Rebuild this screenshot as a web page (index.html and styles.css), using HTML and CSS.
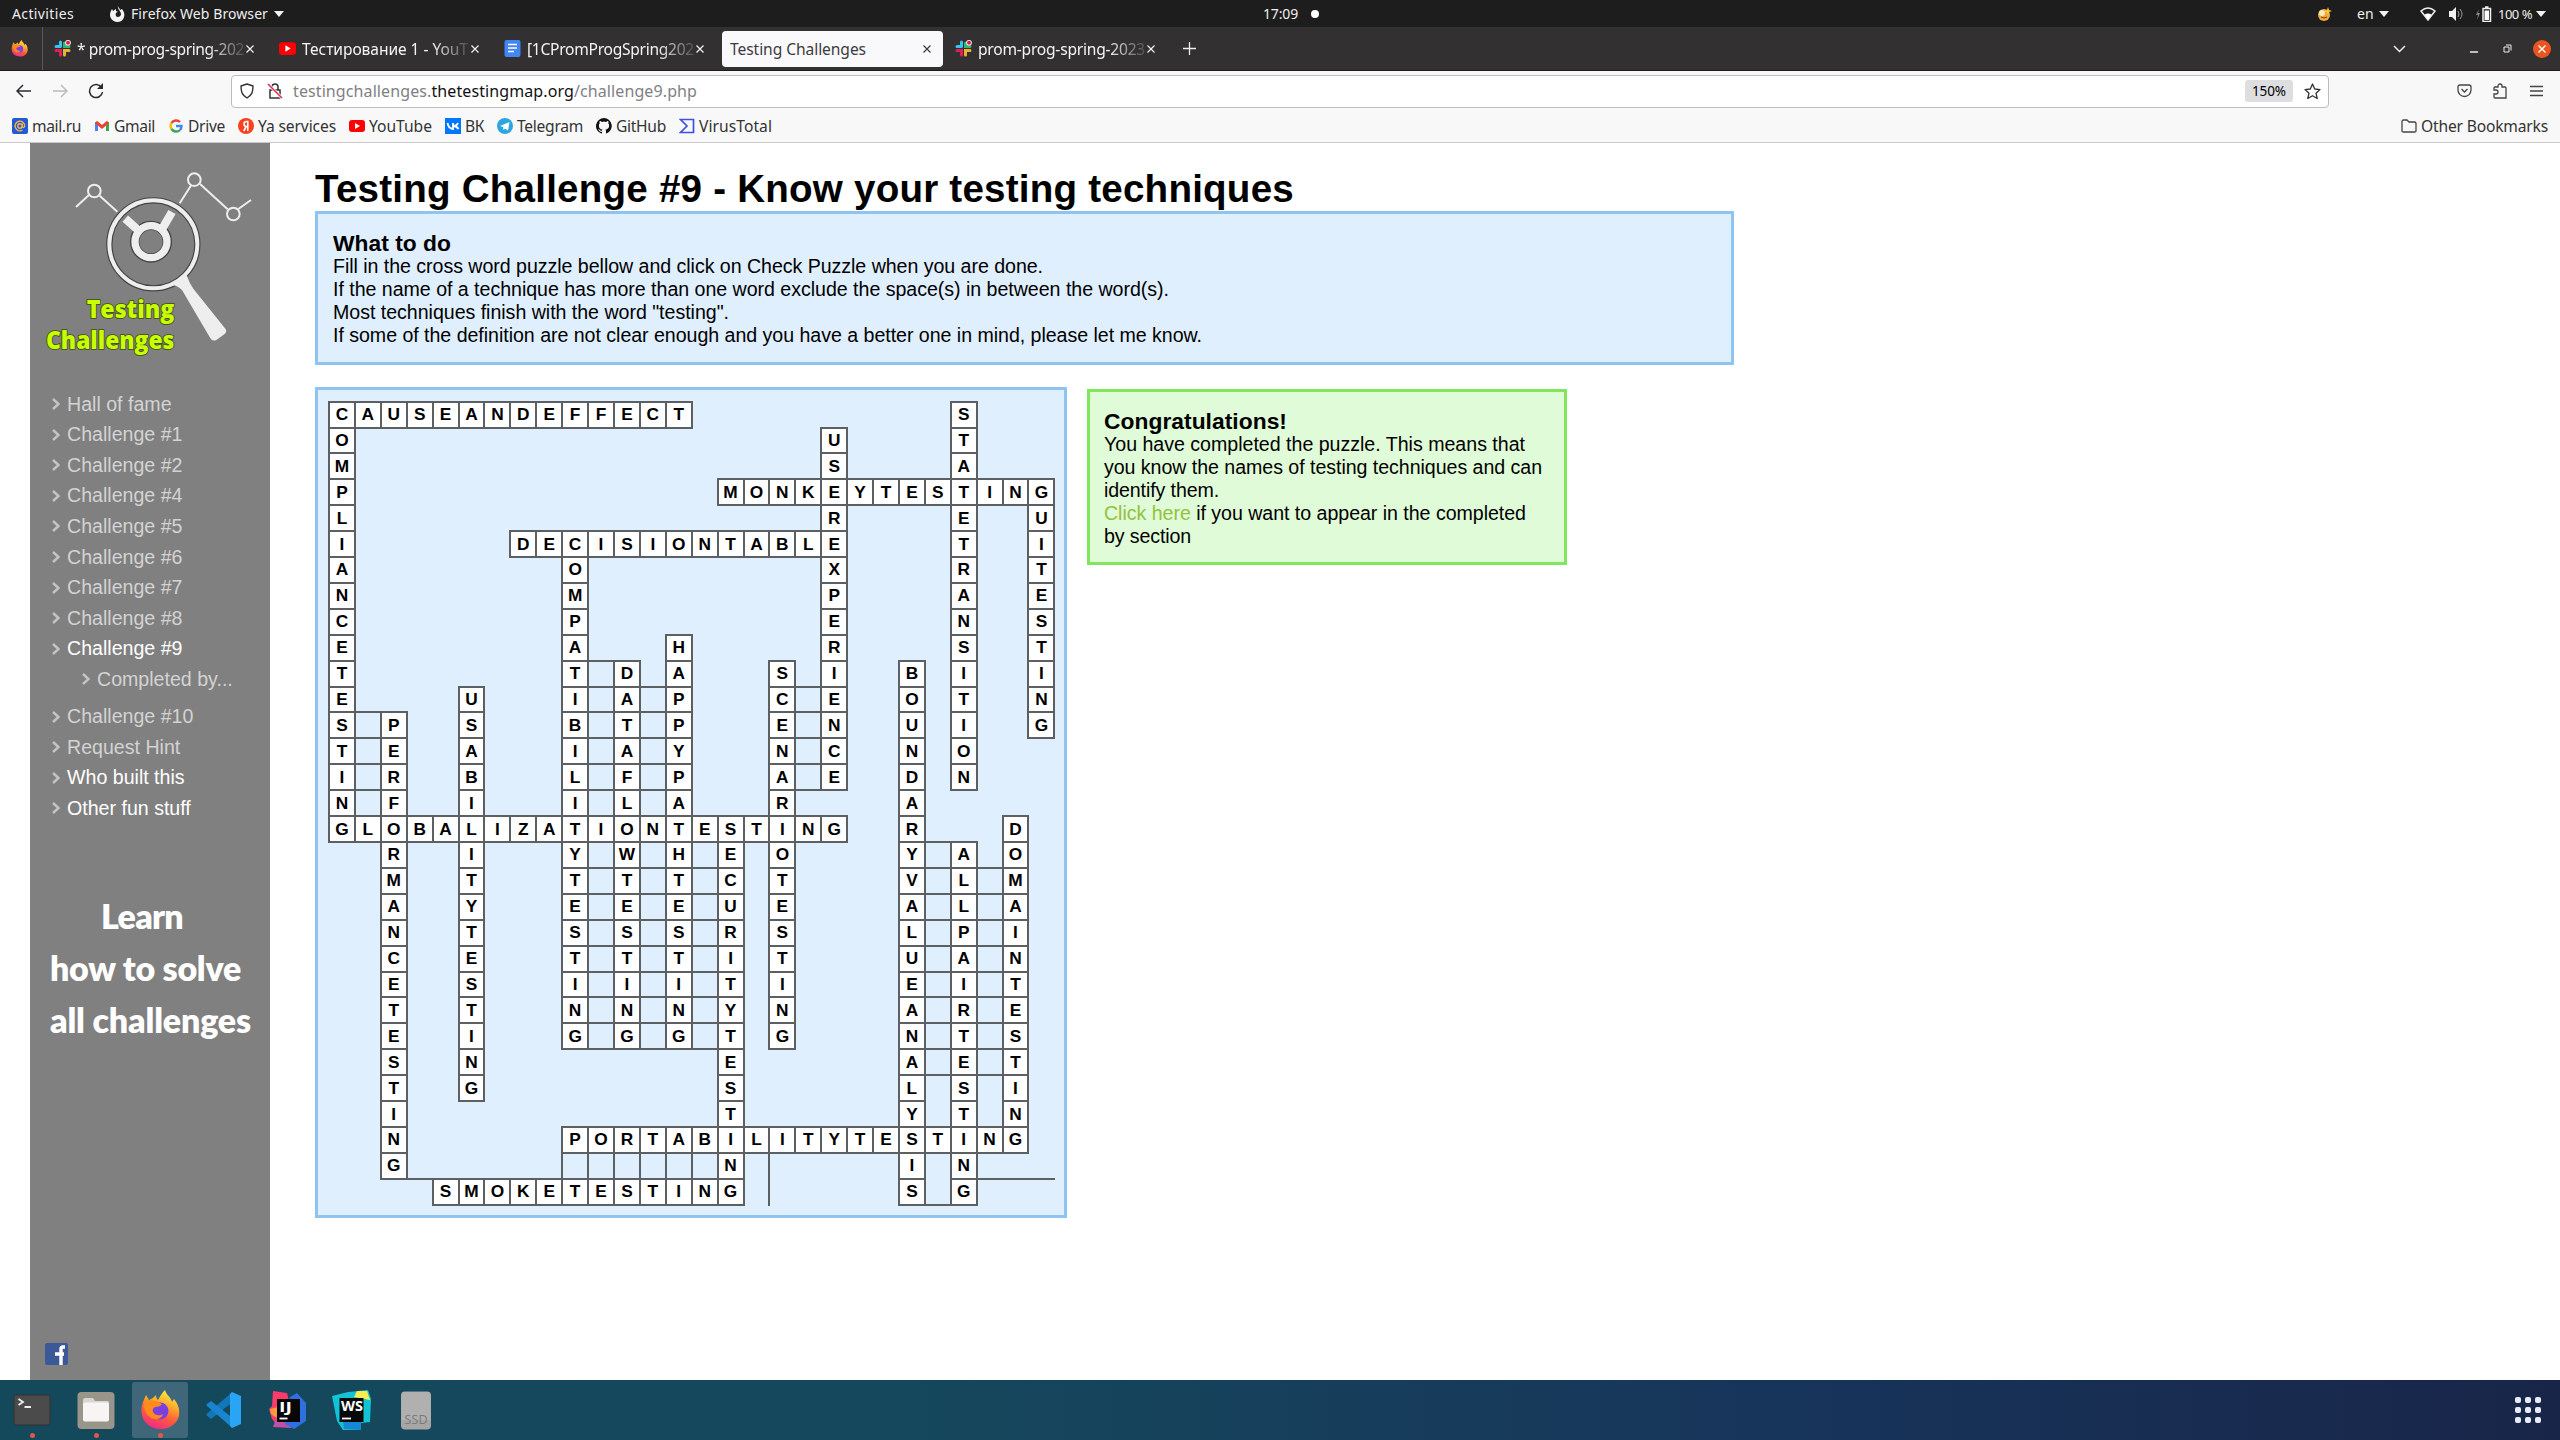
FILE: index.html
```html
<!DOCTYPE html>
<html lang="en">
<head>
<meta charset="utf-8">
<title>Testing Challenges</title>
<link rel="stylesheet" href="styles.css">
</head>
<body>
<svg width="0" height="0" class="defs">
  <defs>
    <linearGradient id="flame" x1=".7" y1="0" x2=".3" y2="1"><stop offset="0" stop-color="#fff14a"/><stop offset=".35" stop-color="#ffa72b"/><stop offset=".65" stop-color="#ff5a3c"/><stop offset="1" stop-color="#f0288c"/></linearGradient>
    <symbol id="firefox" viewBox="0 0 40 40">
      <path fill="url(#flame)" d="M25 0c1 5 6 7 7 12l2-3c4 5 6 10 5 16-1 8-9 14-18 14C10 39 2 32 1.500 22 1 15 4 10 6 5l3 5c3-1 5-3 7-5 0 3 1 4 2 5 2-4 4-7 7-10z"/>
      <circle cx="20" cy="21" r="8.500" fill="#7a3fe0"/>
      <path fill="#ff8a1e" d="M5 11c4-1 9-1 13 1l4 2c-1 2-4 3-7 3-2 1-3 3-2 5 2 4 7 4 10 2-1 5-8 7-13 3-5-3-7-9-5-16z"/>
    </symbol>
    <symbol id="slack" viewBox="0 0 17 17">
      <g stroke-width="3" stroke-linecap="round" fill="none"><path d="M6.500 2v4.500M2 6.500h4.500" stroke="#36c5f0"/><path d="M10.500 3v3.500h4.500" stroke="#2eb67d"/><path d="M10.500 15v-4.500H15" stroke="#ecb22e"/><path d="M2 10.500h4.500V15" stroke="#e01e5a"/></g>
      <circle cx="14" cy="2.800" r="2.800" fill="#fff"/><circle cx="14" cy="2.800" r="2" fill="#e01e3a"/>
    </symbol>
    <symbol id="youtube" viewBox="0 0 16 16"><rect y="2" width="16" height="12" rx="3" fill="#f00"/><path d="M6 5l5 3-5 3z" fill="#fff"/></symbol>
    <symbol id="x" viewBox="0 0 10 10"><path d="M1.500 1.500l7 7m0-7l-7 7" stroke="currentColor" stroke-width="1.200"/></symbol>
    <symbol id="chev" viewBox="0 0 8 12"><path d="M1 1l5.500 5L1 11" fill="none" stroke="#c4c4c4" stroke-width="2.400"/></symbol>
  </defs>
</svg>

<div class="topbar">
  <span class="t" data-w="62">Activities</span>
  <svg class="ff-mono" width="16" height="18" viewBox="0 0 16 18"><path d="M9 1c0 2 2 2 2 4l2-1c2 3 3 5 2 8-1 4-4 5-7 5s-7-3-7-7c0-3 1-4 2-6l1 2 3-2v2l2 1c-2 0-3 2-2 4 1 2 5 1 5-2S8 4 9 1z" fill="#f2f2f2"/></svg>
  <span class="t" data-w="137">Firefox Web Browser</span><i class="caret caret-app"></i>
  <span class="t clock" data-w="35">17:09</span><i class="dot"></i>
  <span class="spacer"></span>
  <svg width="15" height="16" viewBox="0 0 15 16"><circle cx="7" cy="9" r="6" fill="#f0a93a"/><circle cx="5" cy="7" r="3" fill="#ffe9ba"/><path d="M11 1l1 3 3 1-3 1-1 3-1-3-3-1 3-1z" fill="#ffc83d"/><path d="M4 11q3 2 6 0" stroke="#7b3c10" fill="none"/></svg>
  <span class="t lang" data-w="17">en</span><i class="caret caret-lang"></i>
  <svg class="wifi" width="16" height="14" viewBox="0 0 16 14"><path d="M1 4q7-6 14 0L8 13z" fill="none" stroke="#eee" stroke-width="1.500"/><path d="M4.500 7.500q3.500-2 7 0L8 13z" fill="#fff"/></svg>
  <svg class="sound" width="17" height="14" viewBox="0 0 17 14"><path d="M1 4h3l4-4v14l-4-4H1z" fill="#f2f2f2"/><path d="M10 4q2 3 0 6M12 2q4 5 0 10" fill="none" stroke="#999"/></svg>
  <svg class="battery" width="16" height="16" viewBox="0 0 16 16"><path d="M3 3L0 9h2l-1 5 3-7H2z" fill="#888"/><path d="M7 2.500h7.500v13H7zM9 1h3.500" fill="none" stroke="#eee" stroke-width="1.500"/><path d="M8.500 4.500h4.500v9.500H8.500z" fill="#fff"/></svg>
  <span class="t pct" data-w="34">100 %</span><i class="caret caret-end"></i>
</div>

<div class="tabs">
  <div class="pinned"><svg width="17" height="17"><use href="#firefox"/></svg></div>
  <div class="tab"><svg width="17" height="17"><use href="#slack"/></svg><span class="t fade" data-w="167">* prom-prog-spring-202</span><svg class="close" width="10" height="10"><use href="#x"/></svg></div>
  <div class="tab"><svg width="17" height="17"><use href="#youtube"/></svg><span class="t fade" data-w="166">Тестирование 1 - YouT</span><svg class="close" width="10" height="10"><use href="#x"/></svg></div>
  <div class="tab"><svg width="17" height="17" viewBox="0 0 17 17"><rect x=".5" width="16" height="17" rx="2" fill="#4285f4"/><path d="M4 4.500h9M4 8h9M4 11.500h6" stroke="#fff" stroke-width="1.600"/></svg><span class="t fade" data-w="167">[1CPromProgSpring202</span><svg class="close" width="10" height="10"><use href="#x"/></svg></div>
  <div class="tab active"><span class="t" data-w="136">Testing Challenges</span><svg class="close" width="10" height="10"><use href="#x"/></svg></div>
  <div class="tab"><svg width="17" height="17"><use href="#slack"/></svg><span class="t fade" data-w="167">prom-prog-spring-2023</span><svg class="close" width="10" height="10"><use href="#x"/></svg></div>
  <svg class="plus" width="13" height="13" viewBox="0 0 13 13"><path d="M6.500 0v13M0 6.500h13" stroke="#eee" stroke-width="1.300"/></svg>
  <span class="spacer"></span>
  <svg class="list" width="13" height="8" viewBox="0 0 13 8"><path d="M1 1l5.500 5.500L12 1" fill="none" stroke="#eee" stroke-width="1.500"/></svg>
  <svg class="min" width="8" height="8" viewBox="0 0 8 8"><path d="M0 7h8" stroke="#eee" stroke-width="1.500"/></svg>
  <svg class="restore" width="9" height="9" viewBox="0 0 9 9"><path d="M1 3h5v5H1zM3 1h5v5.500" fill="none" stroke="#eee"/></svg>
  <svg width="18" height="18" viewBox="0 0 18 18"><circle cx="9" cy="9" r="9" fill="#e95420"/><path d="M5.500 5.500l7 7m0-7l-7 7" stroke="#fff" stroke-width="1.300"/></svg>
</div>

<div class="nav">
  <svg width="16" height="14" viewBox="0 0 16 14"><path d="M7 1L1 7l6 6M1 7h14" fill="none" stroke="#2b2a33" stroke-width="1.500"/></svg>
  <svg class="fwd" width="16" height="14" viewBox="0 0 16 14"><path d="M9 1l6 6-6 6M15 7H1" fill="none" stroke="#bbb" stroke-width="1.500"/></svg>
  <svg class="reload" width="16" height="16" viewBox="0 0 16 16"><path d="M13.500 4.500A6.500 6.500 0 1 0 14.500 9" fill="none" stroke="#2b2a33" stroke-width="1.500"/><path d="M15 0v6H9z" fill="#2b2a33"/></svg>
  <div class="url">
    <svg width="16" height="16" viewBox="0 0 16 16"><path d="M8 1l6 2c0 6-1 9-6 12-5-3-6-6-6-12z" fill="none" stroke="#333" stroke-width="1.400" stroke-linejoin="round"/></svg>
    <svg class="lock" width="16" height="16" viewBox="0 0 16 16"><path d="M3 7h10v8H3zM5 7V4a3 3 0 0 1 6 0v3" fill="none" stroke="#333" stroke-width="1.500"/><path d="M1 1l14 14" stroke="#fff" stroke-width="3"/><path d="M1 1l14 14" stroke="#e22850" stroke-width="1.500"/></svg>
    <span class="t addr" data-w="404">testingchallenges.<b>thetestingmap.org</b>/challenge9.php</span>
    <span class="spacer"></span>
    <span class="zoom"><span class="t" data-w="34">150%</span></span>
    <svg width="17" height="17" viewBox="0 0 17 17"><path d="M8.500 1l2.200 5 5.300.600-4 3.600 1.200 5.300-4.700-2.800-4.700 2.800L5 10.200 1 6.600 6.300 6z" fill="none" stroke="#333" stroke-width="1.300" stroke-linejoin="round"/></svg>
  </div>
  <span class="spacer"></span>
  <svg class="pocket" width="15" height="14" viewBox="0 0 15 14"><path d="M1 3q0-2 2-2h9q2 0 2 2v3a6.500 6.500 0 0 1-13 0z" fill="none" stroke="#444" stroke-width="1.300"/><path d="M4.500 5l3 3 3-3" fill="none" stroke="#444" stroke-width="1.300"/></svg>
  <svg class="ext" width="15" height="16" viewBox="0 0 15 16"><path d="M1 6V5q0-1 1-1h3V3a2 2 0 0 1 4 0v1h3q1 0 1 1v10H2q-1 0-1-1v-3h2a1.800 1.800 0 0 0 0-4H1z" fill="none" stroke="#444" stroke-width="1.300"/></svg>
  <svg width="13" height="12" viewBox="0 0 13 12"><path d="M0 1.500h13M0 6h13M0 10.500h13" stroke="#444" stroke-width="1.300"/></svg>
</div>

<div class="marks">
  <a><svg width="16" height="16" viewBox="0 0 16 16"><rect width="16" height="16" rx="2" fill="#1f5bd6"/><circle cx="8" cy="8" r="2.200" fill="none" stroke="#ffb340" stroke-width="1.400"/><path d="M10.200 5.500v3.500q1.500 1.500 2.500-1a4.800 4.800 0 1 0-2.200 4" fill="none" stroke="#ffb340" stroke-width="1.300"/></svg><span class="t" data-w="49">mail.ru</span></a>
  <a><svg width="16" height="16" viewBox="0 0 16 16"><path d="M2.500 13V4" stroke="#4285f4" stroke-width="3"/><path d="M13.500 13V4" stroke="#34a853" stroke-width="3"/><path d="M2 4l6 5 6-5" fill="none" stroke="#ea4335" stroke-width="3"/></svg><span class="t" data-w="41">Gmail</span></a>
  <a><svg width="16" height="16" viewBox="0 0 16 16"><g fill="none" stroke-width="2.400"><path d="M12 4A5.500 5.500 0 0 0 3.500 5" stroke="#ea4335"/><path d="M3.500 5a5.500 5.500 0 0 0 0 6" stroke="#fbbc05"/><path d="M3.500 11a5.500 5.500 0 0 0 8.500 1" stroke="#34a853"/><path d="M12 12q1.500-1.500 1.500-4H8" stroke="#4285f4"/></g></svg><span class="t" data-w="37">Drive</span></a>
  <a><svg width="16" height="16" viewBox="0 0 16 16"><circle cx="8" cy="8" r="8" fill="#fc3f1d"/><path d="M9.800 13V3.500H8.500q-2.500 0-2.500 2.500t2.500 2.500h1.300M8.200 8.500L5.800 13" fill="none" stroke="#fff" stroke-width="1.600"/></svg><span class="t" data-w="78">Ya services</span></a>
  <a><svg width="16" height="16"><use href="#youtube"/></svg><span class="t" data-w="63">YouTube</span></a>
  <a><svg width="16" height="16" viewBox="0 0 16 16"><rect width="16" height="16" fill="#07f"/><path d="M2.500 5q1 5.500 5.500 6V5M13 5q-1 3-5 3 4 0 5.500 3" fill="none" stroke="#fff" stroke-width="1.800"/></svg><span class="t" data-w="19">ВК</span></a>
  <a><svg width="16" height="16" viewBox="0 0 16 16"><circle cx="8" cy="8" r="8" fill="#2ca5e0"/><path d="M3 8l9.500-4-1.500 8.500-3-2-1.500 1.500-.5-3z" fill="#fff"/></svg><span class="t" data-w="66">Telegram</span></a>
  <a><svg width="16" height="16" viewBox="0 0 16 16"><path fill="#111" d="M8 0a8 8 0 0 0-2.500 15.600c.4 0 .5-.2.500-.4v-1.500c-2.200.500-2.700-1-2.700-1-.4-1-.9-1.200-.9-1.200-.7-.5.100-.5.100-.5.800.100 1.200.800 1.200.800.700 1.300 1.900.900 2.300.700.100-.5.300-.9.500-1.100-1.800-.2-3.600-.9-3.600-4 0-.9.300-1.600.8-2.100-.1-.2-.4-1 .1-2.200 0 0 .7-.2 2.200.8a7.500 7.500 0 0 1 4 0c1.500-1 2.200-.8 2.200-.8.400 1.200.2 2 .1 2.200.5.500.8 1.200.8 2.100 0 3.100-1.900 3.800-3.700 4 .3.300.6.800.6 1.500v2.200c0 .2.100.5.500.4A8 8 0 0 0 8 0z"/></svg><span class="t" data-w="50">GitHub</span></a>
  <a><svg width="16" height="16" viewBox="0 0 16 16"><path d="M1.500 1.500h13v13h-13L8 8z" fill="none" stroke="#3f51e5" stroke-width="1.700"/></svg><span class="t" data-w="73">VirusTotal</span></a>
  <span class="spacer"></span>
  <a class="other"><svg width="16" height="14" viewBox="0 0 16 14"><path d="M1 12V2.500Q1 1 2.500 1H6l2 2h5.500Q15 3 15 4.500V12q0 1-1.500 1h-11Q1 13 1 12z" fill="none" stroke="#444" stroke-width="1.300"/></svg><span class="t" data-w="127">Other Bookmarks</span></a>
</div>

<div class="page">
  <aside class="side">
    <svg class="logo" width="240" height="220" viewBox="90 9 720 660">
      <g fill="none" stroke="#444" stroke-width="13"><circle cx="460" cy="313" r="132" stroke-width="19"/><circle cx="453" cy="305" r="49" stroke-width="28"/></g>
      <g fill="none" stroke="#eee" stroke-width="6">
        <path d="M228 201L266 166M299 167L352 215M539 190L574 135M600 132L683 208M715 207L753 180"/>
        <circle cx="283" cy="153" r="19"/><circle cx="583" cy="119" r="19"/><circle cx="700" cy="222" r="19"/>
        <circle cx="460" cy="313" r="132" stroke-width="12"/>
        <circle cx="453" cy="305" r="48" stroke-width="22"/>
        <path d="M376 236L414 270M516 216L488 264" stroke-width="25"/>
      </g>
      <path d="M514 436L560 406 Q568 430 580 446L676 566Q682 573 674 582L648 601Q638 604 632 596L546 450Q530 434 514 436z" fill="#eee"/>
      <g class="logo-text"><text x="260" y="535" textLength="263" lengthAdjust="spacingAndGlyphs">Testing</text><text x="138" y="626" textLength="385" lengthAdjust="spacingAndGlyphs">Challenges</text></g>
    </svg>
    <ul class="menu">
      <li><svg width="8" height="12"><use href="#chev"/></svg>Hall of fame</li>
      <li><svg width="8" height="12"><use href="#chev"/></svg>Challenge #1</li>
      <li><svg width="8" height="12"><use href="#chev"/></svg>Challenge #2</li>
      <li><svg width="8" height="12"><use href="#chev"/></svg>Challenge #4</li>
      <li><svg width="8" height="12"><use href="#chev"/></svg>Challenge #5</li>
      <li><svg width="8" height="12"><use href="#chev"/></svg>Challenge #6</li>
      <li><svg width="8" height="12"><use href="#chev"/></svg>Challenge #7</li>
      <li><svg width="8" height="12"><use href="#chev"/></svg>Challenge #8</li>
      <li class="on"><svg width="8" height="12"><use href="#chev"/></svg>Challenge #9</li>
      <li class="sub"><svg width="8" height="12"><use href="#chev"/></svg>Completed by...</li>
      <li><svg width="8" height="12"><use href="#chev"/></svg>Challenge #10</li>
      <li><svg width="8" height="12"><use href="#chev"/></svg>Request Hint</li>
      <li class="on"><svg width="8" height="12"><use href="#chev"/></svg>Who built this</li>
      <li class="on"><svg width="8" height="12"><use href="#chev"/></svg>Other fun stuff</li>
    </ul>
    <div class="learn"><span class="l1" data-w="82">Learn</span><span data-w="191">how to solve</span><span data-w="201">all challenges</span></div>
    <svg class="fb" width="23" height="22" viewBox="0 0 23 22"><rect width="23" height="22" rx="2" fill="#3b5998"/><path d="M20 4h-2q-2 0-2 2v16M10 11h9" fill="none" stroke="#fff" stroke-width="3.400"/></svg>
  </aside>
  <main>
    <h1><span data-w="979">Testing Challenge #9 - Know your testing techniques</span></h1>
    <section class="box todo">
      <h2><span data-w="118">What to do</span></h2>
      <p><span data-w="710">Fill in the cross word puzzle bellow and click on Check Puzzle when you are done.</span></p>
      <p><span data-w="836">If the name of a technique has more than one word exclude the space(s) in between the word(s).</span></p>
      <p><span data-w="396">Most techniques finish with the word "testing".</span></p>
      <p><span data-w="869">If some of the definition are not clear enough and you have a better one in mind, please let me know.</span></p>
    </section>
    <div class="row">
      <section class="box puzzle"><div class="grid" id="grid"></div></section>
      <section class="box done">
        <h2><span data-w="183">Congratulations!</span></h2>
        <p><span data-w="421">You have completed the puzzle. This means that</span></p>
        <p><span data-w="438">you know the names of testing techniques and can</span></p>
        <p><span data-w="115">identify them.</span></p>
        <p><span data-w="422"><a>Click here</a> if you want to appear in the completed</span></p>
        <p><span data-w="87">by section</span></p>
      </section>
    </div>
  </main>
</div>

<div class="dock">
  <div class="app run"><svg width="40" height="40" viewBox="0 0 40 40"><rect x="2" y="5" width="36" height="30" rx="2" fill="#4b4b4b" stroke="#333"/><path d="M6.500 9l4.500 3-4.500 3M12.500 17h6.500" fill="none" stroke="#eee" stroke-width="1.800"/></svg></div>
  <div class="app run"><svg width="40" height="40" viewBox="0 0 40 40"><rect x="1.500" y="2" width="37" height="37" rx="4" fill="#99958a"/><path d="M7 12V10q0-2 2-2h8l2 3h13q1 0 1 2v4H7z" fill="#d8d6d0"/><rect x="7" y="12.500" width="26" height="19" rx="2" fill="#f7f5f4"/></svg></div>
  <div class="app run sel"><svg width="40" height="40"><use href="#firefox"/></svg></div>
  <div class="app"><svg width="40" height="40" viewBox="0 0 40 40"><path d="M28 2.500v10L7 29l-4-3.500q-1.500-1 0-2z" fill="#1177bb"/><path d="M28 37.500v-10L7 11l-4 3q-1.500 1 0 2z" fill="#1a85cf"/><path d="M28 2l9 4v28l-9 4-2-2V4z" fill="#2aa4f4"/></svg></div>
  <div class="app"><svg width="40" height="40" viewBox="0 0 40 40"><path d="M5 1l14 2 4 16-14 16-5-6-3-10 3-3z" fill="#fc3a6c"/><path d="M2 19l8-2v12l-7-5z" fill="#fb9a3a"/><path d="M5 37l5-14 18 9-5 6z" fill="#c04fa8"/><path d="M22 7l7-4 9 10v18l-12 8-9-5z" fill="#2f6fe0"/><rect x="9" y="9" width="23" height="23" fill="#080808"/><path d="M11.500 28.500h8" stroke="#fff" stroke-width="1.800"/><text class="ide" x="11" y="22" textLength="13" lengthAdjust="spacingAndGlyphs">IJ</text></svg></div>
  <div class="app"><svg width="40" height="40" viewBox="0 0 40 40"><path d="M0 6l16-4 20-2 3 9-1 23-9 1v7H11L5 31z" fill="#12c3d6"/><path d="M25 1l10 0 3 9-16-3z" fill="#f7ee52"/><path d="M11 31l18 1v8l-17-1z" fill="#1687d0"/><rect x="7.500" y="8" width="24" height="24" fill="#080808"/><path d="M10 28.500h9" stroke="#fff" stroke-width="1.800"/><text class="ide" x="9" y="21" textLength="22" lengthAdjust="spacingAndGlyphs">WS</text></svg></div>
  <div class="app"><svg width="40" height="40" viewBox="0 0 40 40"><rect x="5" y="1.500" width="30" height="38" rx="4" fill="#a6a6a6"/><path d="M5.500 30V5q0-3 3-3h23q3 0 3 3v25z" fill="#b0b0b0"/><text class="ssd" x="8.500" y="34" textLength="23">SSD</text></svg></div>
  <span class="spacer"></span>
  <div class="dots"><i></i><i></i><i></i><i></i><i></i><i></i><i></i><i></i><i></i></div>
</div>
<script src="app.js"></script>
</body>
</html>
```

FILE: styles.css
```css
* { box-sizing: border-box; }
body { margin: 0; width: 2560px; height: 1440px; overflow: hidden; background: #fff; font-family: "Liberation Sans", Arial, sans-serif; color: #000; display: flex; flex-direction: column; }
svg { flex: none; display: block; }
.defs { position: absolute; }
.spacer { flex: 1; }
[data-w] { display: inline-block; white-space: pre; flex: none; }
.t { font-family: "Noto Sans", "Open Sans", sans-serif; font-size: 15.6px; line-height: 22px; }

.topbar { height: 27px; background: #1d1d1d; color: #eee; display: flex; align-items: center; padding: 0 14px 0 12px; flex: none; }
.topbar .t { font-size: 14px; }
.ff-mono { margin: 0 6px 0 35px; }
.caret { border: 5px solid transparent; border-top: 6px solid #f2f2f2; border-bottom: 0; }
.caret-app { margin-left: 6px; }
.clock { margin-left: 979px; }
.dot { width: 8px; height: 8px; border-radius: 50%; background: #fff; margin-left: 13px; }
.lang { margin-left: 25px; }
.caret-lang { margin-left: 5px; }
.wifi { margin-left: 31px; }
.sound { margin-left: 12px; }
.battery { margin-left: 11px; }
.topbar .pct { margin-left: 6px; font-size: 13px; }
.caret-end { margin-left: 4px; }

.tabs { height: 44px; background: #323031; border-bottom: 1px solid #1c1b1c; color: #f4f4f4; display: flex; align-items: center; padding-right: 9px; flex: none; }
.pinned { width: 43px; height: 43px; padding-left: 11px; border-right: 1px solid #5a5859; display: flex; align-items: center; }
.tab { width: 225px; height: 36px; display: flex; align-items: center; padding: 0 13px 0 11px; }
.tab svg:first-child { margin-right: 6px; }
.tab .close { margin-left: auto; }
.fade { -webkit-mask-image: linear-gradient(90deg, #000 78%, rgba(0, 0, 0, .15) 100%); mask-image: linear-gradient(90deg, #000 78%, rgba(0, 0, 0, .15) 100%); }
.tab.active { width: 221px; background: #f9f9fb; color: #3c3b40; border-radius: 4px; padding: 0 11px 0 8px; margin: 0 1px 0 4px; }
.plus { margin-left: 14px; }
.list { margin-right: 64px; }
.min { margin-right: 25px; }
.restore { margin-right: 21px; }

.nav { height: 40px; background: #f8f8f9; display: flex; align-items: center; padding: 0 17px 0 16px; flex: none; }
.fwd { margin-left: 20px; }
.reload { margin-left: 20px; }
.url { width: 2098px; height: 33px; margin-left: 127px; background: #fff; border: 1px solid #bdbdbf; border-radius: 4px; display: flex; align-items: center; padding: 0 7px 0 7px; }
.lock { margin: 0 10px 0 12px; }
.addr { color: #808084; font-size: 16px; }
.addr b { color: #111; font-weight: 400; }
.zoom { width: 48px; height: 22px; background: #dedee0; border-radius: 3px; display: flex; align-items: center; justify-content: center; margin-right: 11px; }
.zoom .t { font-size: 13.5px; }
.pocket { margin-right: 21px; }
.ext { margin-right: 22px; }

.marks { height: 32px; background: #f8f8f9; border-bottom: 1px solid #c9c9cb; color: #333; display: flex; align-items: center; gap: 13px; padding: 0 12px 2px 12px; flex: none; }
.marks a { display: flex; align-items: center; gap: 4px; }

.page { flex: 1; display: flex; padding-left: 30px; min-height: 0; }
.side { width: 240px; background: #808080; display: flex; flex-direction: column; }
.logo-text { font-family: "Open Sans", "Noto Sans", sans-serif; font-weight: 800; font-size: 73px; fill: #c8ff00; stroke: #3f4a10; stroke-width: 5px; paint-order: stroke; }
.menu { list-style: none; margin: 26px 0 0; padding: 0 0 0 22px; font-size: 19.6px; color: #d3d3d3; }
.menu li { height: 30.55px; display: flex; align-items: center; gap: 7px; }
.menu .on { color: #fff; }
.menu .sub { margin: 0 0 7px 30px; }
.learn { display: flex; flex-direction: column; padding-left: 20px; margin-top: 66px; font: 800 34px/52px Lato, "Open Sans", sans-serif; color: #fff; }
.learn .l1 { margin-left: 51px; }
.fb { margin: auto 0 15px 15px; }

main { padding: 23px 0 0 45px; }
h1 { margin: 0; height: 45px; font-size: 38.6px; line-height: 45px; }
.box { border: 3px solid #91c3f0; background: #dfeffe; }
.box h2 { margin: 0; font-size: 22.8px; line-height: 24px; height: 24px; }
.box p { margin: 0; font-size: 19.6px; line-height: 22.9px; height: 22.9px; }
.todo { width: 1419px; height: 154px; padding: 17px 15px; }
.row { display: flex; align-items: flex-start; margin-top: 22px; }
.puzzle { width: 752px; height: 831px; padding: 10.6px 10px; }
.grid { display: grid; grid-template-columns: repeat(28, 25.92px); grid-template-rows: repeat(31, 25.91px); }
.cell { margin: 0 -2px -2px 0; border: 2px solid #5d6063; font-weight: 700; font-size: 17.3px; display: flex; align-items: center; justify-content: center; }
.cell.letter { background: #fff; }
.line { margin: 0 -2px -2px 0; }
.line.top { border-top: 2px solid #5d6063; }
.line.bottom { border-bottom: 2px solid #5d6063; }
.line.left { border-left: 2px solid #5d6063; }
.done { width: 480px; height: 176px; margin: 2px 0 0 20px; padding: 17px 14px; border-color: #80e75c; background: #e0fbd8; }
.done a { color: #94c13c; }

.dock { height: 60px; flex: none; background: linear-gradient(90deg, #14485b 0%, #15485c 35%, #17345a 70%, #182548 100%); display: flex; align-items: center; padding-right: 19px; }
.app { width: 56px; height: 56px; margin: 0 4px; border-radius: 3px; display: flex; align-items: center; justify-content: center; position: relative; }
.sel { background: #406779; }
.run::after { content: ""; position: absolute; left: 25.500px; bottom: 0; width: 5px; height: 5px; border-radius: 50%; background: #e2574a; }
.ide { font: 700 15px "Open Sans", sans-serif; fill: #fff; }
.ssd { font: 12.500px "Open Sans", sans-serif; fill: #7b7b7b; }
.dots { display: grid; grid-template-columns: repeat(3, 6px); gap: 4px; }
.dots i { width: 6px; height: 6px; border-radius: 2px; background: #e8ecf6; }
```

FILE: app.js
```js
// Crossword entries: word, row, column, direction
const words = [
  ["CAUSEANDEFFECT", 0, 0, "a"], ["MONKEYTESTING", 3, 15, "a"], ["DECISIONTABLE", 5, 7, "a"],
  ["GLOBALIZATIONTESTING", 16, 0, "a"], ["PORTABILITYTESTING", 28, 9, "a"], ["SMOKETESTING", 30, 4, "a"],
  ["COMPLIANCETESTING", 0, 0, "d"], ["USEREXPERIENCE", 1, 19, "d"], ["STATETRANSITION", 0, 24, "d"],
  ["GUITESTING", 3, 27, "d"], ["COMPATIBILITYTESTING", 5, 9, "d"], ["DATAFLOWTESTING", 10, 11, "d"],
  ["HAPPYPATHTESTING", 9, 13, "d"], ["SCENARIOTESTING", 10, 17, "d"], ["BOUNDARYVALUEANALYSIS", 10, 22, "d"],
  ["USABILITYTESTING", 11, 5, "d"], ["PERFORMANCETESTING", 12, 2, "d"], ["SECURITYTESTING", 16, 15, "d"],
  ["ALLPAIRTESTING", 17, 24, "d"], ["DOMAINTESTING", 16, 26, "d"]
];
// Outlined cells without a letter: column, first row, last row
const blanks = [[1, 12, 15], [10, 10, 15], [12, 11, 15], [10, 17, 24], [12, 17, 24], [14, 17, 24],
  [18, 11, 14], [23, 17, 25], [25, 18, 25],
  [9, 29, 29], [10, 29, 29], [11, 29, 29], [12, 29, 29], [13, 29, 29], [14, 29, 29]];
// Loose border segments: row, column, row span, column span, side
const lines = [[29, 3, 1, 6, "bottom"], [29, 17, 2, 1, "left"], [30, 23, 1, 1, "bottom"], [30, 25, 1, 3, "top"]];

const grid = document.getElementById("grid");
function place(cls, r, c, rs, cs, text) {
  const el = document.createElement("div");
  el.className = cls;
  el.style.gridArea = `${r + 1} / ${c + 1} / span ${rs} / span ${cs}`;
  el.textContent = text;
  grid.append(el);
}
for (const [c, a, b] of blanks) for (let r = a; r <= b; r++) place("cell", r, c, 1, 1, "");
for (const [r, c, rs, cs, side] of lines) place("line " + side, r, c, rs, cs, "");
const letters = new Map();
for (const [w, r, c, d] of words) {
  [...w].forEach((ch, i) => letters.set(d === "a" ? `${r},${c + i}` : `${r + i},${c}`, ch));
}
for (const [key, ch] of letters) {
  const [r, c] = key.split(",").map(Number);
  place("cell letter", r, c, 1, 1, ch);
}

// Track each label so that it fills its set width
for (const el of document.querySelectorAll("[data-w]")) {
  const range = document.createRange();
  range.selectNodeContents(el);
  const natural = range.getBoundingClientRect().width;
  const want = Number(el.dataset.w);
  el.style.letterSpacing = (want - natural) / el.textContent.length + "px";
  el.style.width = want + "px";
}
```
